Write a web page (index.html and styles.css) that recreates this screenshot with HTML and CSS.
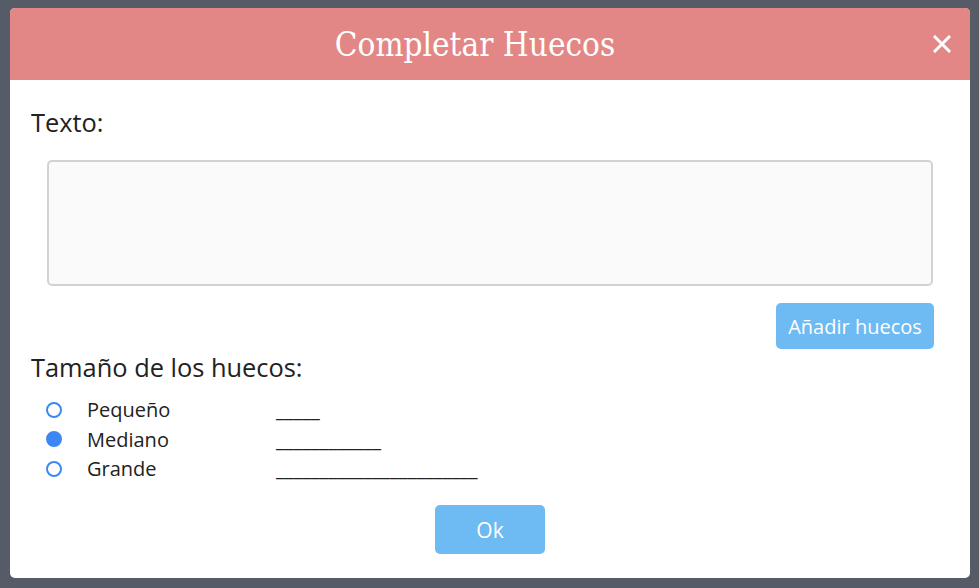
FILE: index.html
```html
<!DOCTYPE html>
<html lang="es">
<head>
<meta charset="utf-8">
<title>Completar Huecos</title>
<link rel="stylesheet" href="styles.css">
</head>
<body>
<div class="dialog">
  <div class="header">
    <h1 class="title">Completar Huecos</h1>
    <button class="close" aria-label="Cerrar">
      <svg width="18" height="18" viewBox="0 0 18 18"><path d="M2 2L16 16M16 2L2 16" stroke="#fff" stroke-width="3" stroke-linecap="square"/></svg>
    </button>
  </div>
  <div class="body">
    <div class="label">Texto:</div>
    <textarea class="text"></textarea>
    <div class="actions-right">
      <button class="btn btn-add">Añadir huecos</button>
    </div>
    <div class="label label-size">Tamaño de los huecos:</div>
    <div class="options">
      <label class="opt"><span class="radio"></span><span class="opt-name">Pequeño</span><span class="opt-sample">_____</span></label>
      <label class="opt"><span class="radio checked"></span><span class="opt-name">Mediano</span><span class="opt-sample">____________</span></label>
      <label class="opt"><span class="radio"></span><span class="opt-name">Grande</span><span class="opt-sample">_______________________</span></label>
    </div>
    <div class="actions-center">
      <button class="btn btn-ok">Ok</button>
    </div>
  </div>
</div>
</body>
</html>
```

FILE: styles.css
```css
html, body {
  margin: 0;
  padding: 0;
  height: 100%;
}
body {
  background: #555b67;
  font-family: "Open Sans", "Noto Sans", sans-serif;
  padding: 8px 10px 0 10px;
  box-sizing: border-box;
}
.dialog {
  width: 960px;
  height: 570px;
  background: #fff;
  border-radius: 5px;
  overflow: hidden;
  display: flex;
  flex-direction: column;
}
.header {
  height: 72px;
  background: #e28785;
  display: flex;
  align-items: center;
  justify-content: center;
  padding-right: 30px;
  position: relative;
  flex-shrink: 0;
}
.title {
  margin: 0;
  font-family: "DejaVu Serif Condensed", "DejaVu Serif", serif;
  font-weight: normal;
  font-size: 33px;
  color: #fff;
}
.close {
  position: absolute;
  right: 19px;
  top: 27px;
  width: 18px;
  height: 18px;
  padding: 0;
  border: none;
  background: none;
  display: flex;
}
.body {
  padding: 27px 37px 0 21px;
  display: flex;
  flex-direction: column;
}
.label {
  font-size: 25.4px;
  color: #222;
  line-height: 30px;
}
.text {
  margin: 23px 0 0 16px;
  height: 126px;
  box-sizing: border-box;
  border: 2px solid #d2d2d2;
  border-radius: 5px;
  background: #fafafa;
  resize: none;
}
.actions-right {
  display: flex;
  justify-content: flex-end;
  margin-top: 17px;
  margin-right: -1px;
}
.btn {
  border: none;
  background: #6ebaf2;
  color: #fff;
  font-family: "Open Sans", "Noto Sans", sans-serif;
  border-radius: 5px;
  font-size: 20px;
  padding: 0;
}
.btn-add {
  width: 158px;
  height: 46px;
}
.label-size {
  margin-top: 3px;
}
.options {
  display: flex;
  flex-direction: column;
  margin-top: 13px;
}
.opt {
  display: flex;
  align-items: center;
  height: 29.5px;
  font-size: 20px;
  color: #222;
}
.radio {
  width: 16px;
  height: 16px;
  box-sizing: border-box;
  border: 2px solid #3f86f5;
  border-radius: 50%;
  margin-left: 15px;
  flex-shrink: 0;
}
.radio.checked {
  background: #3f86f5;
}
.opt-name {
  margin-left: 25px;
  width: 189px;
}
.actions-center {
  display: flex;
  justify-content: center;
  margin-top: 21.5px;
  margin-left: 16px;
}
.btn-ok {
  width: 110px;
  height: 49px;
  font-size: 21px;
}
```
